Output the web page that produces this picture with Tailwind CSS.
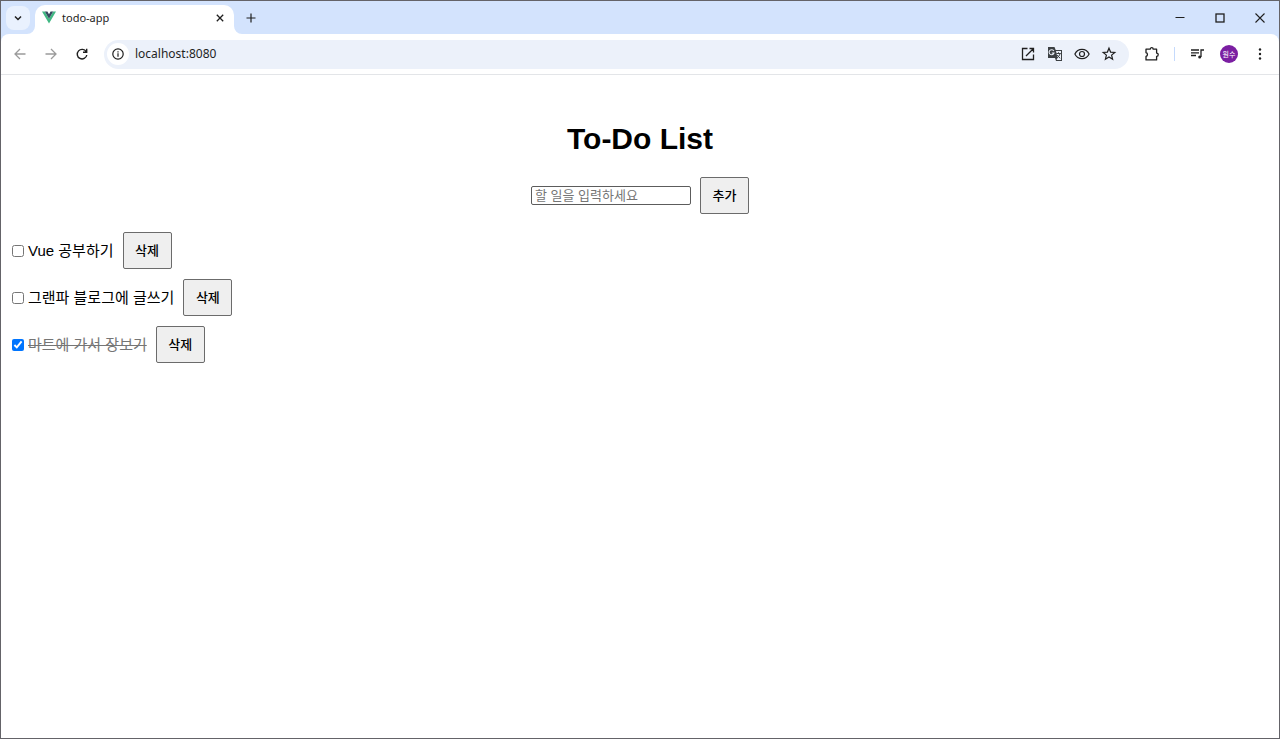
<!DOCTYPE html>
<html lang="ko">
<head>
    <meta charset="UTF-8">
    <meta name="viewport" content="width=device-width, initial-scale=1.0">
    <title>todo-app</title>
    <script src="https://cdn.jsdelivr.net/npm/@tailwindcss/browser@4"></script>
</head>
<body class="bg-white text-black font-['Liberation_Sans','Noto_Sans_CJK_KR',sans-serif]">
    <div class="min-h-screen flex flex-col border border-[#646368]">
        <!-- Tab strip -->
        <header class="bg-[#d3e3fd] font-['Noto_Sans','Noto_Sans_CJK_KR',sans-serif]">
            <div class="flex items-center h-[33px] pl-[5px]">
                <button type="button" aria-label="탭 검색" class="w-6 h-6 flex items-center justify-center rounded-lg bg-[#e9f1fe]">
                    <svg class="w-3 h-3" viewBox="0 0 12 12" fill="none" stroke="#1f1f1f" stroke-width="1.500"><path d="M3 4.500 6 7.500l3-3"/></svg>
                </button>
                <div class="relative flex items-center self-end w-[199px] h-[29px] ml-[5px] pl-[7px] pr-2 rounded-t-[10px] bg-white">
                    <svg class="absolute bottom-0 -left-2 w-2 h-2" viewBox="0 0 8 8"><path d="M8 0v8H0a8 8 0 0 0 8-8z" fill="#fff"/></svg>
                    <svg class="absolute bottom-0 -right-2 w-2 h-2" viewBox="0 0 8 8"><path d="M0 0v8h8a8 8 0 0 1-8-8z" fill="#fff"/></svg>
                    <svg class="w-[14px] h-[13px] mb-1" viewBox="0 0 14 12"><path d="M0 0h2.800L7 7.300 11.200 0H14L7 12z" fill="#41b883"/><path d="M2.800 0h2.600L7 2.800 8.600 0h2.600L7 7.300z" fill="#35495e"/></svg>
                    <span class="ml-[6px] mb-1 text-[11px] leading-4 text-[#1f1f1f] grow">todo-app</span>
                    <button type="button" aria-label="탭 닫기" class="w-3 h-3 mb-1 flex items-center justify-center">
                        <svg class="w-2 h-2" viewBox="0 0 8 8" stroke="#1f1f1f" stroke-width="1.300"><path d="m.8.8 6.400 6.400M7.200.8.8 7.200"/></svg>
                    </button>
                </div>
                <button type="button" aria-label="새 탭" class="ml-3 w-[10px] h-[10px]">
                    <svg viewBox="0 0 10 10" stroke="#1f1f1f" stroke-width="1.200"><path d="M5 .5v9M.5 5h9"/></svg>
                </button>
                <div class="flex ml-auto">
                    <button type="button" aria-label="최소화" class="w-10 h-8 flex items-center justify-center">
                        <svg class="w-[10px] h-[10px]" viewBox="0 0 10 10" stroke="#1f1f1f"><path d="M.5 4.500h9"/></svg>
                    </button>
                    <button type="button" aria-label="최대화" class="w-10 h-8 flex items-center justify-center">
                        <svg class="w-[10px] h-[10px]" viewBox="0 0 10 10" fill="none" stroke="#1f1f1f" stroke-width="1.300"><rect x="1" y="1" width="8" height="8"/></svg>
                    </button>
                    <button type="button" aria-label="닫기" class="w-[39px] h-8 flex items-center justify-center">
                        <svg class="w-[10px] h-[10px]" viewBox="0 0 10 10" stroke="#1f1f1f" stroke-width="1.100"><path d="m.5.500 9 9M9.500.500l-9 9"/></svg>
                    </button>
                </div>
            </div>
            <!-- Toolbar -->
            <div class="flex items-center h-[41px] pl-[11px] pr-[11px] bg-white rounded-t-lg border-b border-[#e3e5e8]">
                <button type="button" aria-label="뒤로" class="w-4 h-4">
                    <svg viewBox="0 0 16 16" fill="none" stroke="#9b9b9b" stroke-width="1.300"><path d="M13.500 8H3.500M8 3 3 8l5 5"/></svg>
                </button>
                <button type="button" aria-label="앞으로" class="w-4 h-4 ml-[15px]">
                    <svg viewBox="0 0 16 16" fill="none" stroke="#9b9b9b" stroke-width="1.300"><path d="M2.500 8h10M8 3l5 5-5 5"/></svg>
                </button>
                <button type="button" aria-label="새로고침" class="w-4 h-4 ml-[15px]">
                    <svg viewBox="0 0 16 16" fill="none" stroke="#1f1f1f" stroke-width="1.400"><path d="M12.200 5.700A4.800 4.800 0 1 0 12.800 9M12.700 2.700v3.600H9"/></svg>
                </button>
                <div class="flex items-center grow h-[29px] ml-[14px] pl-[3px] pr-3 rounded-full bg-[#ecf1fa]">
                    <button type="button" aria-label="사이트 정보" class="w-[22px] h-[22px] flex items-center justify-center rounded-full bg-white">
                        <svg class="w-3 h-3" viewBox="0 0 12 12" fill="none" stroke="#1f1f1f" stroke-width="1.200"><circle cx="6" cy="6" r="5.200"/><path d="M6 5.300v3.500M6 3.200v1.200"/></svg>
                    </button>
                    <input type="text" aria-label="주소" value="localhost:8080" class="grow min-w-0 ml-[6px] text-[12px] leading-5 text-[#1f1f1f] bg-transparent outline-none">
                    <div class="flex items-center gap-[11px]">
                        <button type="button" aria-label="새 창에서 열기" class="w-4 h-4">
                            <svg viewBox="0 0 16 16" fill="none" stroke="#1f1f1f" stroke-width="1.300"><path d="M7.500 2.500h-5v11h11v-5M9.500 2.500h4v4M13.300 2.700 6 10"/></svg>
                        </button>
                        <button type="button" aria-label="번역" class="w-4 h-4">
                            <svg viewBox="0 0 16 16" fill="none"><path d="M1 1h6.500l1.200 3H15v11H9l-1-3H1z" fill="#3c4043"/><path d="M9 5h5v9H9.500l1-2z" fill="#ecf1fa"/><path d="M6.800 5A2.500 2.500 0 1 0 7 7H4.800" stroke="#ecf1fa" stroke-width="1.100"/><path d="M9.300 7.500h4.500M11.500 6.300v1.200M13 7.600c-.4 1.900-1.500 3.200-3 4.200M10.200 9c.7 1.200 1.700 2.300 3 3.200" stroke="#3c4043"/></svg>
                        </button>
                        <button type="button" aria-label="보기" class="w-4 h-4">
                            <svg viewBox="0 0 16 16" fill="none" stroke="#1f1f1f" stroke-width="1.200"><path d="M.9 8C2.300 5 5 3.300 8 3.300S13.700 5 15.100 8C13.700 11 11 12.700 8 12.700S2.300 11 .9 8z"/><circle cx="8" cy="8" r="2.500"/></svg>
                        </button>
                        <button type="button" aria-label="북마크" class="w-4 h-4">
                            <svg viewBox="0 0 16 16" fill="none" stroke="#1f1f1f" stroke-width="1.200"><path d="m8 2.200 1.600 3.900 4.200.3-3.200 2.700 1 4.100L8 11l-3.600 2.200 1-4.100-3.200-2.700 4.200-.3z"/></svg>
                        </button>
                    </div>
                </div>
                <button type="button" aria-label="확장 프로그램" class="w-4 h-4 ml-[15px]">
                    <svg viewBox="0 0 16 16" fill="none" stroke="#1f1f1f" stroke-width="1.300" stroke-linejoin="round"><path d="M2 3.200h4.200a1.500 1.500 0 0 1 3 0h3.400v3.900a1.600 1.600 0 0 1 0 3.200v3.600H2v-3.500a1.900 1.900 0 0 0 0-3.700z"/></svg>
                </button>
                <div class="w-px h-[14px] ml-[14px] bg-[#c5dafc]"></div>
                <button type="button" aria-label="미디어 제어" class="w-4 h-4 ml-[14px]">
                    <svg viewBox="0 0 16 16" fill="none" stroke="#1f1f1f" stroke-width="1.300"><path d="M2 4h8M2 6.800h8M2 9.500h5M12 11V4h3"/><circle cx="10.700" cy="11" r="1.500" fill="#1f1f1f" stroke="none"/></svg>
                </button>
                <button type="button" aria-label="프로필" class="w-[18px] h-[18px] ml-[15px] flex items-center justify-center rounded-full bg-[#7b1fa2] text-white text-[7px] leading-none whitespace-nowrap">원수</button>
                <button type="button" aria-label="메뉴" class="w-4 h-4 ml-[14px]">
                    <svg viewBox="0 0 16 16" fill="#1f1f1f"><circle cx="8" cy="3.500" r="1.200"/><circle cx="8" cy="8" r="1.200"/><circle cx="8" cy="12.500" r="1.200"/></svg>
                </button>
            </div>
        </header>

        <!-- To-do app -->
        <main class="grow px-[11px] pt-[46px]">
            <h1 class="text-center text-[30px] leading-9 font-bold">To-Do List</h1>
            <form class="flex items-center justify-center gap-[9px] mt-5">
                <input type="text" aria-label="할 일" placeholder="할 일을 입력하세요" class="w-[160px] h-[19px] px-[3px] text-[13px] leading-4 bg-white border border-[#5c5c5c] rounded-xs placeholder:text-[#757575]">
                <button type="submit" class="w-[49px] h-[37px] text-[13px] font-medium bg-[#efefef] border border-[#6b6b6b] rounded-xs">추가</button>
            </form>
            <ul class="flex flex-col gap-[10px] mt-[18px]">
                <li class="flex items-center">
                    <input type="checkbox" id="todo1" class="w-3 h-3">
                    <label for="todo1" class="ml-1 text-[15px] leading-5">Vue 공부하기</label>
                    <button type="button" class="w-[49px] h-[37px] ml-[9px] text-[13px] font-medium bg-[#efefef] border border-[#6b6b6b] rounded-xs">삭제</button>
                </li>
                <li class="flex items-center">
                    <input type="checkbox" id="todo2" class="w-3 h-3">
                    <label for="todo2" class="ml-1 text-[15px] leading-5">그랜파 블로그에 글쓰기</label>
                    <button type="button" class="w-[49px] h-[37px] ml-[9px] text-[13px] font-medium bg-[#efefef] border border-[#6b6b6b] rounded-xs">삭제</button>
                </li>
                <li class="flex items-center">
                    <input type="checkbox" id="todo3" class="w-3 h-3" checked>
                    <label for="todo3" class="ml-1 text-[15px] leading-5 text-[#757575] line-through">마트에 가서 장보기</label>
                    <button type="button" class="w-[49px] h-[37px] ml-[9px] text-[13px] font-medium bg-[#efefef] border border-[#6b6b6b] rounded-xs">삭제</button>
                </li>
            </ul>
        </main>
    </div>
</body>
</html>
